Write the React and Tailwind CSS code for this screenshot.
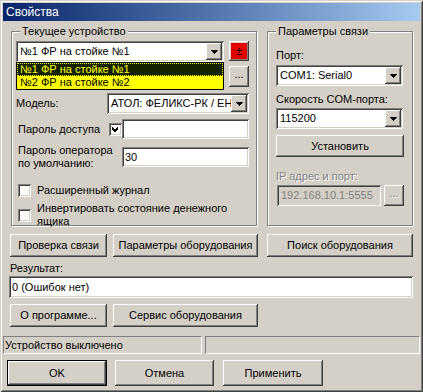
import React from "react";

const raised =
  "bg-[#d4d0c8] shadow-[inset_-1px_-1px_0_#404040,inset_1px_1px_0_#ffffff,inset_-2px_-2px_0_#808080,inset_2px_2px_0_#d4d0c8]";
const sunken =
  "shadow-[inset_1px_1px_0_#808080,inset_-1px_-1px_0_#ffffff,inset_2px_2px_0_#404040,inset_-2px_-2px_0_#d4d0c8]";

const Arrow = () => (
  <div className={`w-[16px] h-[17px] flex items-center justify-center ${raised}`}>
    <svg width="7" height="4" shapeRendering="crispEdges">
      <path d="M0 0H7V1H6V2H5V3H4V4H3V3H2V2H1V1H0Z" fill="#000" />
    </svg>
  </div>
);

const Combo = ({ className, children }) => (
  <div className={`${sunken} bg-white h-[21px] flex items-center p-[2px] ${className}`}>
    <div className="flex-1 pl-[2px] overflow-hidden whitespace-nowrap">{children}</div>
    <Arrow />
  </div>
);

const Button = ({ className, children }) => (
  <div className={`${raised} flex items-center justify-center whitespace-nowrap ${className}`}>
    {children}
  </div>
);

const Field = ({ className, children }) => (
  <div className={`${sunken} flex items-center px-[4px] whitespace-nowrap ${className}`}>
    {children}
  </div>
);

const Check = ({ checked }) => (
  <div className={`${sunken} bg-white w-[13px] h-[13px] shrink-0 flex items-center justify-center`}>
    {checked && (
      <svg width="7" height="7" shapeRendering="crispEdges">
        <path d="M6 0V3L3 6H2L0 4V1L2 3H3L6 0Z" fill="#000" />
      </svg>
    )}
  </div>
);

const Group = ({ title, className, children }) => (
  <div
    className={`border border-[#808080] shadow-[inset_1px_1px_0_#ffffff,1px_1px_0_#ffffff] ${className}`}
  >
    <div className="-mt-[7px] ml-[8px] px-[2px] w-fit bg-[#d4d0c8] leading-[13px]">{title}</div>
    {children}
  </div>
);

const App = () => {
  return (
    <div className="w-[423px] h-[392px] p-[3px] bg-[#d4d0c8] text-[11px] leading-[13px] text-black font-['Liberation_Sans',Arial,sans-serif] shadow-[inset_1px_1px_0_#d4d0c8,inset_-1px_-1px_0_#404040,inset_2px_2px_0_#ffffff,inset_-2px_-2px_0_#808080] flex flex-col">
      {/* title */}
      <div className="h-[18px] bg-linear-to-r from-[#0a246a] to-[#a6caf0] text-white text-[12px] flex items-center pl-[3px]">
        Свойства
      </div>

      {/* groups */}
      <div className="flex mt-[10px] ml-[8px]">
        <Group title="Текущее устройство" className="w-[246px] h-[195px]">
          <div className="relative ml-[4px] mt-[3px] flex gap-[5px]">
            <Combo className="w-[208px]">№1 ФР на стойке №1</Combo>
            <Button className="w-[20px] h-[20px] bg-[#e50000]">±</Button>
            <div className="absolute left-0 top-[21px] w-[208px] border border-black bg-[#ffff00]">
              <div className="h-[13px] bg-[#142200] text-[#ffff00] pl-[3px] outline-1 outline-dotted outline-[#ffff00] -outline-offset-1">
                №1 ФР на стойке №1
              </div>
              <div className="h-[13px] pl-[3px]">№2 ФР на стойке №2</div>
            </div>
          </div>
          <div className="flex justify-end mr-[7px] mt-[4px]">
            <Button className="w-[20px] h-[21px] pb-[4px]">...</Button>
          </div>
          <div className="flex items-center ml-[4px] mt-[6px]">
            <span className="w-[91px]">Модель:</span>
            <Combo className="w-[142px]">АТОЛ: ФЕЛИКС-РК / ЕНВД</Combo>
          </div>
          <div className="flex items-center ml-[6px] mt-[5px]">
            <span className="w-[91px]">Пароль доступа</span>
            <Check checked />
            <Field className="bg-white w-[127px] h-[20px]"></Field>
          </div>
          <div className="flex items-center ml-[6px] mt-[5px]">
            <span className="w-[104px]">
              Пароль оператора
              <br />
              по умолчанию:
            </span>
            <Field className="bg-white w-[127px] h-[20px] pl-[3px]">30</Field>
          </div>
          <div className="flex items-center ml-[6px] mt-[14px] gap-[6px]">
            <Check />
            <span>Расширенный журнал</span>
          </div>
          <div className="flex items-center ml-[6px] mt-[5px] gap-[6px]">
            <Check />
            <span>
              Инвертировать состояние денежного
              <br />
              ящика
            </span>
          </div>
        </Group>

        <Group title="Параметры связи" className="w-[146px] h-[195px] ml-[10px]">
          <div className="ml-[8px] mt-[11px]">Порт:</div>
          <Combo className="ml-[8px] mt-[3px] w-[127px]">COM1: Serial0</Combo>
          <div className="ml-[8px] mt-[7px]">Скорость COM-порта:</div>
          <Combo className="ml-[8px] mt-[2px] w-[127px]">115200</Combo>
          <Button className="ml-[8px] mt-[6px] w-[128px] h-[22px]">Установить</Button>
          <div className="ml-[8px] mt-[13px] text-[#808080] [text-shadow:1px_1px_0_#ffffff]">
            IP адрес и порт:
          </div>
          <div className="flex ml-[9px] mt-[2px] gap-[3px]">
            <Field className="w-[104px] h-[21px] text-[#808080]">192.168.10.1:5555</Field>
            <Button className="w-[20px] h-[21px] pb-[4px] text-[#808080] [text-shadow:1px_1px_0_#ffffff]">
              ...
            </Button>
          </div>
        </Group>
      </div>

      {/* action buttons */}
      <div className="flex ml-[7px] mt-[8px]">
        <Button className="w-[97px] h-[23px]">Проверка связи</Button>
        <Button className="w-[145px] h-[23px] ml-[6px]">Параметры оборудования</Button>
        <Button className="w-[146px] h-[23px] ml-[9px]">Поиск оборудования</Button>
      </div>
      <div className="ml-[7px] mt-[5px]">Результат:</div>
      <Field className="bg-white ml-[6px] mt-[1px] w-[404px] h-[22px] pl-[3px]">0 (Ошибок нет)</Field>
      <div className="flex ml-[7px] mt-[6px]">
        <Button className="w-[97px] h-[23px]">О программе...</Button>
        <Button className="w-[145px] h-[23px] ml-[6px]">Сервис оборудования</Button>
      </div>

      {/* status bar */}
      <div className="flex mt-[9px] gap-[3px]">
        <div className="w-[199px] h-[18px] border border-t-[#808080] border-l-[#808080] border-b-white border-r-white flex items-center pl-[1px]">
          Устройство выключено
        </div>
        <div className="flex-1 h-[18px] border border-t-[#808080] border-l-[#808080] border-b-white border-r-white"></div>
      </div>

      {/* dialog buttons */}
      <div className="flex ml-[4px] mt-[6px]">
        <div className="w-[100px] h-[26px] border border-black flex">
          <Button className="flex-1">OK</Button>
        </div>
        <Button className="w-[99px] h-[26px] ml-[8px]">Отмена</Button>
        <Button className="w-[100px] h-[26px] ml-[9px]">Применить</Button>
      </div>
    </div>
  );
};

export default App;
